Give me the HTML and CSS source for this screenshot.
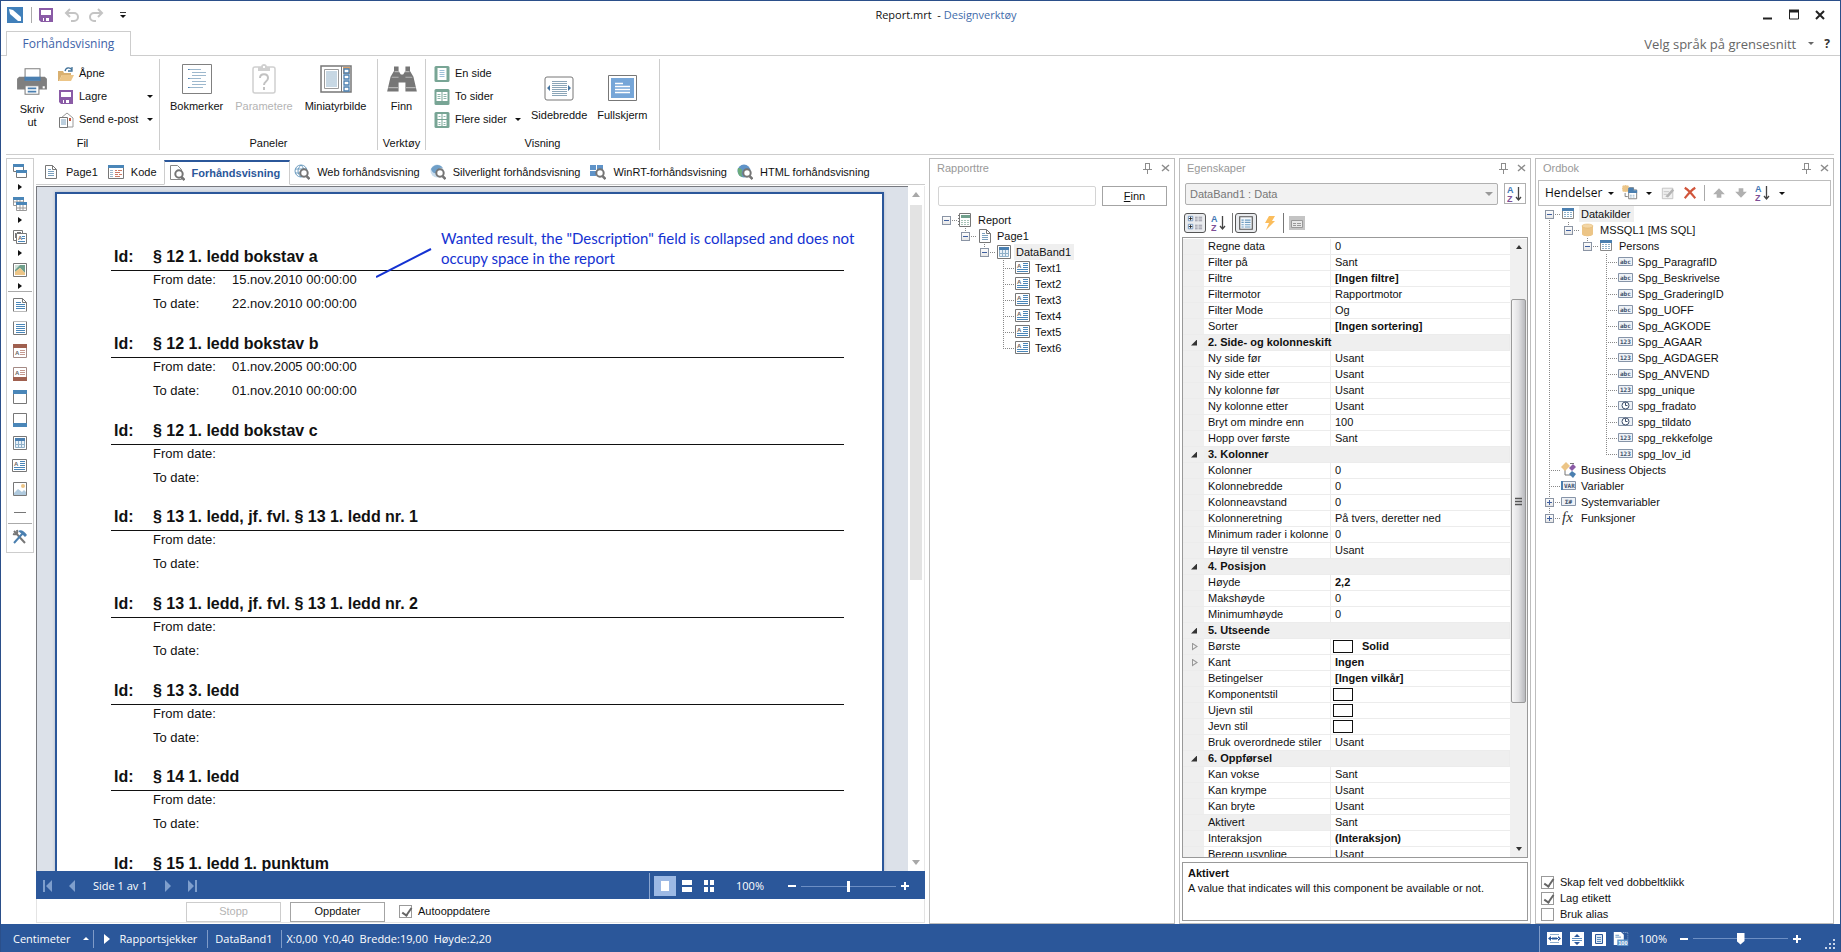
FILE: index.html
```html
<!DOCTYPE html>
<html lang="no">
<head>
  <meta charset="UTF-8">
  <meta name="viewport" content="width=device-width, initial-scale=1.0">
  <title>Report.mrt - Designverktøy</title>
  <link rel="stylesheet" href="styles.css">
</head>
<body>
  <!-- icon sprite -->
  <svg class="sprite" aria-hidden="true">
    <symbol id="i-save" viewBox="0 0 16 16"><path d="M1 1h14v14H3l-2-2z" fill="#8a5ba6"/><path d="M3 3h10v5H3zM5 11h6v3H5z" fill="#fff"/><path d="M6 11h2v3H6z" fill="#8a5ba6"/></symbol>
    <symbol id="i-undo" viewBox="0 0 16 16"><path d="M6 2L2 6l4 4M2 6h8a4 4 0 0 1 0 8H7" fill="none" stroke="#c4c4c4" stroke-width="2"/></symbol>
    <symbol id="i-redo" viewBox="0 0 16 16"><path d="M10 2l4 4-4 4M14 6H6a4 4 0 0 0 0 8h2" fill="none" stroke="#c4c4c4" stroke-width="2"/></symbol>
    <symbol id="i-open" viewBox="0 0 16 16"><path d="M0 5h5l1 2h7v2H4l-3 6H0z" fill="#d9b070"/><path d="M4 9h12l-3 6H1z" fill="#ecc587"/><path d="M7 5c1-4 5-4 7-1M14 1v4h-4" fill="none" stroke="#3f7098" stroke-width="1.3"/></symbol>
    <symbol id="i-mail" viewBox="0 0 16 16"><path d="M3 6l6-5 6 5v9H8V6z" fill="#fff" stroke="#999"/><path d="M1.500 5.500h8v10h-8z" fill="#fff" stroke="#777"/><path d="M3 8h5M3 10h5M3 12h5" stroke="#7aa0be"/><path d="M11 6h2v3h-2z" fill="#c9543c"/></symbol>
    <symbol id="i-print" viewBox="0 0 30 28"><path d="M3 9h24l2 2v10H1V11z" fill="#7f7f7f"/><path d="M8.500 1.500h14v12h-14z" fill="#fff" stroke="#7f7f7f"/><path d="M8 9h15v4H8z" fill="#4a7fb0"/><path d="M8.500 17.500h13v8h-13z" fill="#fff" stroke="#7f7f7f"/><path d="M11 20h8M11 23h8" stroke="#4a7fb0" stroke-width="1.500"/><path d="M25 18h2v2h-2z" fill="#fff"/></symbol>
    <symbol id="i-bookmarks" viewBox="0 0 32 32"><path d="M1.500 1.500h29v29h-29z" fill="#fff" stroke="#808080"/><path d="M8 6.500h12M11 9.500h14M11 12.500h14M8 15.500h12M11 18.500h14M11 21.500h14M8 24.500h14" stroke="#9db8cd"/><path d="M7 6.500h1.500M7 15.500h1.500M7 24.500h1.500" stroke="#4a7fb0"/></symbol>
    <symbol id="i-params" viewBox="0 0 32 32"><path d="M7 4h18a2 2 0 0 1 2 2v22a2 2 0 0 1-2 2H7a2 2 0 0 1-2-2V6a2 2 0 0 1 2-2z" fill="none" stroke="#d0d0d0" stroke-width="1.500"/><path d="M10 4h3c0-4 6-4 6 0h3v4H10z" fill="#d0d0d0"/><path d="M15 3h2v2h-2z" fill="#fff"/><path d="M12 15c0-5 8-5 8 0 0 4-4 3-4 7M16 24v3" fill="none" stroke="#c2c2c2" stroke-width="2"/></symbol>
    <symbol id="i-thumbs" viewBox="0 0 32 32"><path d="M1 3h30v26H1z" fill="#fff" stroke="#777" stroke-width="1.500"/><path d="M21.500 3v26" stroke="#777"/><path d="M4.500 6.500h14v19h-14z" fill="#fff" stroke="#999"/><path d="M6 9h11M6 11h11M6 13h11M6 15h11M6 17h11M6 19h11M6 21h11M6 23h11" stroke="#8fb0c8"/><path d="M23 4h7v7h-7z" fill="#d6a06c"/><path d="M24 6h5v4h-5zM24 12h5v4h-5zM24 18h5v4h-5zM24 24h5v4h-5z" fill="#fff" stroke="#4a7fb0" stroke-width="1.300"/></symbol>
    <symbol id="i-find" viewBox="0 0 28 28"><path d="M7 3h4v4l2 3h2l2-3V3h4v4l3 5 3 13H17v-8h-6v8H1l3-13 3-5z" fill="#767676"/><path d="M7.500 7.500h4M16.500 7.500h4M5 12.500h6M17 12.500h6M2 21.500h9M17 21.500h9" stroke="#b5b5b5"/></symbol>
    <symbol id="i-one" viewBox="0 0 15 16"><rect width="15" height="16" rx="1.500" fill="#78a595"/><path d="M3 2h9v12H3z" fill="#fff"/><path d="M5 4.500h5M5 6.500h5M5 8.500h5M5 10.500h5" stroke="#9ec0d8"/></symbol>
    <symbol id="i-two" viewBox="0 0 15 16"><rect width="15" height="16" rx="1.500" fill="#78a595"/><path d="M2 3h5v9H2zM8 3h5v9H8z" fill="#fff"/><path d="M3 5.500h3M3 7.500h3M3 9.500h3M9 5.500h3M9 7.500h3M9 9.500h3" stroke="#8db6aa"/></symbol>
    <symbol id="i-many" viewBox="0 0 15 16"><rect width="15" height="16" rx="1.500" fill="#78a595"/><path d="M3 2h4v5H3zM8 2h4v5H8zM3 8h4v6H3zM8 8h4v6H8z" fill="#fff"/><path d="M4 4.500h2M9 4.500h2M4 10.500h2M9 10.500h2M4 12.500h2M9 12.500h2" stroke="#8db6aa"/></symbol>
    <symbol id="i-width" viewBox="0 0 32 32"><rect x="2" y="5" width="28" height="23" rx="2" fill="#fff" stroke="#777"/><path d="M9 9.500h15M9 11.500h15M9 13.500h15M9 15.500h15M9 17.500h15M9 19.500h15M9 21.500h15M9 23.500h15" stroke="#8aa5b8"/><path d="M7 13v6l-3-3zM25 13v6l3-3z" fill="#44739f"/></symbol>
    <symbol id="i-full" viewBox="0 0 32 32"><path d="M2.500 3.500h28v25h-28z" fill="#fff" stroke="#777"/><path d="M5 6h23v20H5z" fill="#76a6d8"/><path d="M9 11.500h8M9 14.500h15M9 17.500h15M9 20.500h15" stroke="#fff" stroke-width="1.300"/></symbol>

    <symbol id="i-page" viewBox="0 0 16 16"><path d="M2.500 1.500h7l4 4v9h-11z" fill="#fff" stroke="#777"/><path d="M9.500 1.500v4h4" fill="none" stroke="#777"/><path d="M5 5.500h3M5 7.500h6M5 9.500h6M5 11.500h6" stroke="#7aa0be"/></symbol>
    <symbol id="i-code" viewBox="0 0 16 16"><path d="M.500 1.500h15v13H.500z" fill="#fff" stroke="#777"/><path d="M0 1h16v3H0z" fill="#4a86b8"/><path d="M2 6.500h3M2 8.500h3M2 10.500h3M2 12.500h3" stroke="#9db8cd"/><path d="M7 6.500h2M10 6.500h4M7 8.500h5M7 10.500h3M11 10.500h3M7 12.500h5" stroke="#cc7a66"/></symbol>
    <symbol id="i-lens" viewBox="0 0 16 16"><circle cx="10" cy="9" r="3.700" fill="#fff" stroke="#757575" stroke-width="2"/><path d="M12.500 12l3 3" stroke="#757575" stroke-width="2.500"/></symbol>
    <symbol id="i-preview" viewBox="0 0 16 16"><path d="M1.500.500h7l4 4v10h-11z" fill="#fff" stroke="#888"/><use href="#i-lens"/></symbol>
    <symbol id="i-web" viewBox="0 0 16 16"><circle cx="7" cy="7" r="6" fill="#fff" stroke="#6c9cc0"/><path d="M1 5h12M1 9h12M7 1c-4 4-4 8 0 12M7 1c4 4 4 8 0 12" fill="none" stroke="#6c9cc0"/><use href="#i-lens"/></symbol>
    <symbol id="i-silver" viewBox="0 0 16 16"><circle cx="7" cy="7" r="6.500" fill="#c8dcec"/><path d="M1 5c3-5 9-5 12-1-4-1-5 2-6 5-3 1-5-1-6-4z" fill="#6f9fc8"/><use href="#i-lens"/></symbol>
    <symbol id="i-winrt" viewBox="0 0 16 16"><path d="M0 1h6v5H0zM7 1h6v5H7zM0 7h6v5H0zM7 7h6v5H7z" fill="#5f93c8"/><use href="#i-lens"/></symbol>
    <symbol id="i-html" viewBox="0 0 16 16"><circle cx="7" cy="7" r="6.500" fill="#5f93c8"/><path d="M1 4c3 0 5 2 4 4s0 4 1 5C2 13 0 9 1 4z" fill="#6bab7b"/><use href="#i-lens"/></symbol>

    <symbol id="i-bands" viewBox="0 0 16 16"><path d="M1.500 1.500h10v7h-10z" fill="#fff" stroke="#777"/><path d="M1 1h11v3H1z" fill="#4a86b8"/><path d="M4.500 7.500h10v7h-10z" fill="#fff" stroke="#777"/><path d="M4 7h11v3H4z" fill="#4a86b8"/></symbol>
    <symbol id="i-cross" viewBox="0 0 16 16"><path d="M1.500 1.500h10v8h-10zM5 2v8M8 2v8M2 6h10" fill="#fff" stroke="#999"/><path d="M1 1h11v3H1z" fill="#4a86b8"/><path d="M4.500 6.500h10v8h-10zM8 7v8M11 7v8M4 12h11" fill="#fff" stroke="#999"/><path d="M4 6h11v3H4z" fill="#4a86b8"/></symbol>
    <symbol id="i-comps" viewBox="0 0 16 16"><path d="M1.500 1.500h9v10h-9z" fill="#fff" stroke="#777"/><path d="M3.500 4v5M5 3.500h4" stroke="#777"/><path d="M4.500 4.500h10v10h-10z" fill="#fff" stroke="#777"/><text x="6" y="11" class="i-a">A</text><path d="M10 7.500h3M10 9.500h3M6 12.500h7" stroke="#4a86b8"/></symbol>
    <symbol id="i-shape" viewBox="0 0 16 16"><path d="M1.500 1.500h13v13h-13z" fill="#fff" stroke="#777"/><path d="M3 3h10v8l-5-5-5 4z" fill="#70a08c"/><path d="M8 6l5 5v2H3v-3z" fill="#ecc587"/><path d="M3 3h5L3 8z" fill="#cfe0d8"/></symbol>
    <symbol id="i-rtitle" viewBox="0 0 16 16"><path d="M1.500 14v-12.500h9l4 4V14" fill="#fff" stroke="#777"/><path d="M10.500 1.500v4h4" fill="none" stroke="#777"/><path d="M4 5.500h5M4 7.500h9M4 9.500h9M4 11.500h9" stroke="#4a86b8"/><path d="M1.500 14.500h14" stroke="#777" stroke-dasharray="1 1"/></symbol>
    <symbol id="i-rsum" viewBox="0 0 16 16"><path d="M1.500 2v12.500h13V2" fill="#fff" stroke="#777"/><path d="M1.500 1.500h14" stroke="#777" stroke-dasharray="1 1"/><path d="M4 4.500h9M4 6.500h9M4 8.500h9M4 10.500h9M4 12.500h9" stroke="#4a86b8"/></symbol>
    <symbol id="i-phead" viewBox="0 0 16 16"><path d="M1.500 1.500h13v13h-13z" fill="#fff" stroke="#a58a85"/><path d="M1 1h14v4H1z" fill="#a0604f"/><text x="3" y="12" class="i-a">A</text><path d="M8 7.500h5M8 9.500h5M8 11.500h5" stroke="#c59a90"/></symbol>
    <symbol id="i-pfoot" viewBox="0 0 16 16"><path d="M1.500 1.500h13v13h-13z" fill="#fff" stroke="#a58a85"/><path d="M1 11h14v4H1z" fill="#a0604f"/><text x="3" y="9" class="i-a">A</text><path d="M8 4.500h5M8 6.500h5M8 8.500h5" stroke="#c59a90"/></symbol>
    <symbol id="i-head" viewBox="0 0 16 16"><path d="M1.500 1.500h13v13h-13z" fill="#fff" stroke="#777"/><path d="M1 1h14v4H1z" fill="#4a86b8"/></symbol>
    <symbol id="i-foot" viewBox="0 0 16 16"><path d="M1.500 1.500h13v13h-13z" fill="#fff" stroke="#777"/><path d="M1 11h14v4H1z" fill="#4a86b8"/></symbol>
    <symbol id="i-data" viewBox="0 0 16 16"><path d="M1.500 1.500h13v13h-13z" fill="#fff" stroke="#777"/><path d="M3.500 3.500h9v9h-9z" fill="#e8f0f8" stroke="#8fb0c8"/><path d="M3 3h10v3H3z" fill="#4a7fb0"/><path d="M3 9.500h10M6.500 6v7M9.500 6v7" stroke="#8fb0c8"/></symbol>
    <symbol id="i-text" viewBox="0 0 16 16"><path d="M.500 1.500h14v12h-14z" fill="#fff" stroke="#777"/><text x="2" y="8" class="i-a">A</text><path d="M8 3.500h5M8 5.500h5M8 7.500h5M2 9.500h11M2 11.500h11" stroke="#4a86b8"/></symbol>
    <symbol id="i-image" viewBox="0 0 16 16"><path d="M1.500 1.500h13v13h-13z" fill="#fff" stroke="#777"/><circle cx="11" cy="5" r="2" fill="#ecc587"/><path d="M2 14v-2l4-4 4 3 2-2 2 2v3z" fill="#b0cade"/></symbol>
    <symbol id="i-line" viewBox="0 0 16 16"><path d="M2 8.500h12" stroke="#777"/></symbol>
    <symbol id="i-tools" viewBox="0 0 16 16"><path d="M2 2l11 12M1 5c3 1 5 0 4-4" stroke="#777" stroke-width="2" fill="none"/><path d="M2 14L11 4" stroke="#4a7fb0" stroke-width="2"/><path d="M6 2c3-2 6 0 9 4l-2 2-3-3z" fill="#4a7fb0"/></symbol>

    <symbol id="i-report" viewBox="0 0 16 16"><path d="M1.500 1.500h11v13h-11z" fill="#fff" stroke="#777"/><path d="M3 3h9v3H3z" fill="#70a08c"/><path d="M3 8.500h9M3 10.500h9M3 12.500h9" stroke="#a8c4b8" stroke-dasharray="2 1"/><path d="M0 3.500h2M0 6.500h2M0 9.500h2M0 12.500h2" stroke="#777"/></symbol>
    <symbol id="i-table" viewBox="0 0 16 16"><path d="M1.500 2.500h11v10h-11z" fill="#fff" stroke="#888"/><path d="M1 2h12v3H1z" fill="#4a7fb0"/><path d="M3 6.500h8M3 8.500h8M3 10.500h8" stroke="#8fb0c8" stroke-dasharray="2 1"/></symbol>
    <symbol id="i-db" viewBox="0 0 16 16"><path d="M2 4v8c0 3 11 3 11 0V4z" fill="#ecc587"/><ellipse cx="7.500" cy="4" rx="5.500" ry="2" fill="#f3d6a6" stroke="#e0b368" stroke-width=".5"/></symbol>
    <symbol id="i-abc" viewBox="0 0 16 16"><path d="M.500 3.500h14v8H.500z" fill="#eef2f7" stroke="#8694a8"/><text x="2" y="10" class="i-t">abc</text></symbol>
    <symbol id="i-num" viewBox="0 0 16 16"><path d="M.500 3.500h14v8H.500z" fill="#eef2f7" stroke="#8694a8"/><text x="2" y="10" class="i-t">123</text></symbol>
    <symbol id="i-date" viewBox="0 0 16 16"><path d="M.500 3.500h14v8H.500z" fill="#eef2f7" stroke="#8694a8"/><circle cx="7.500" cy="7.500" r="3.500" fill="#fff" stroke="#3d4f6b"/><path d="M7.500 4.500v3h2" fill="none" stroke="#3d4f6b"/></symbol>
    <symbol id="i-var" viewBox="0 0 16 16"><path d="M.500 3.500h14v8H.500z" fill="#eef2f7" stroke="#8694a8"/><path d="M0 3h2v9H0z" fill="#4a7fb0"/><text x="3" y="10" class="i-t">VAR</text></symbol>
    <symbol id="i-sys" viewBox="0 0 16 16"><path d="M.500 3.500h14v8H.500z" fill="#eef2f7" stroke="#8694a8"/><text x="4" y="10" class="i-t">Σ#</text></symbol>
    <symbol id="i-bo" viewBox="0 0 16 16"><path d="M4 8v5h6M9 1.500h4" fill="none" stroke="#777"/><path d="M0 5l5-5 4 4-5 5z" fill="#ecc587"/><path d="M8 6l4-4 3 3-4 4z" fill="#8a5ba6"/><path d="M8 12l3-3 4 3-3 4z" fill="#4a7fb0"/></symbol>
    <symbol id="i-fx" viewBox="0 0 16 16"><text x="1" y="12" class="i-fx">fx</text></symbol>

    <symbol id="i-pin" viewBox="0 0 12 12"><path d="M3.500 1v6M3 1.500h5M1 7.500h9M5.500 8v4" fill="none" stroke="#8c8c8c"/><path d="M7 1h1v6H7z" fill="#8c8c8c"/></symbol>
    <symbol id="i-close" viewBox="0 0 12 12"><path d="M2 3l7 6M9 3L2 9" stroke="#8c8c8c" stroke-width="1.500"/></symbol>
    <symbol id="i-az" viewBox="0 0 16 18"><text x="0" y="8" class="i-letter blue">A</text><text x="0" y="17" class="i-letter purple">Z</text><path d="M11.500 2v13M9 12l2.500 3 2.500-3" fill="none" stroke="#444" stroke-width="1.300"/></symbol>
    <symbol id="i-cat" viewBox="0 0 18 18"><path d="M1.500 1.500h5v5h-5zM1.500 10.500h5v5h-5z" fill="#fff" stroke="#6c93c0"/><path d="M2 4h4M4 2v4M2 13h4M4 11v4" stroke="#222"/><path d="M9 2.500h3M13 2.500h4M9 4.500h3M13 4.500h4M9 6.500h3M13 6.500h4M9 11.500h3M13 11.500h4M9 13.500h3M13 13.500h4M9 15.500h3M13 15.500h4" stroke="#8a8a9a"/></symbol>
    <symbol id="i-list" viewBox="0 0 14 14"><path d="M1.500 1.500h11v11h-11z" fill="#f4f8fc" stroke="#555"/><path d="M3 4.500h2M6 4.500h5M3 6.500h2M6 6.500h5M3 8.500h2M6 8.500h5M3 10.500h2M6 10.500h5" stroke="#6c9cc0"/></symbol>
    <symbol id="i-bolt" viewBox="0 0 12 16"><path d="M5 1h6L8 6h3L2 15l3-7H1z" fill="#fbbd5c"/></symbol>
    <symbol id="i-props" viewBox="0 0 16 16"><path d="M0 1h16v14H0z" fill="#c4c4c4"/><path d="M2.500 5.500h11v7h-11z" fill="#e8e8e8" stroke="#999"/><path d="M4 8.500h3M8 8.500h4M4 10.500h3M8 10.500h4" stroke="#999"/></symbol>
    <symbol id="i-new" viewBox="0 0 18 18"><path d="M1 1h6v6H1zM4 0v8M0 4h8" fill="#ecc587" stroke="#ecc587"/><path d="M3.500 9v4h3M8 3h5v3" fill="none" stroke="#777"/><path d="M7.500 5.500h9v10h-9z" fill="#fff" stroke="#777"/><path d="M7 3h6v3h4v3H7z" fill="#4a7fb0"/><path d="M9 11.500h6M9 13.500h6" stroke="#8fb0c8" stroke-dasharray="2 1"/></symbol>
    <symbol id="i-edit" viewBox="0 0 16 16"><path d="M1.500 2.500h12v12h-12z" fill="#f0f0f0" stroke="#c0c0c0"/><path d="M3 6.500h6M3 9.500h4" stroke="#c0c0c0"/><path d="M5 12l8-9 2 2-7 8z" fill="#b4b4b4"/></symbol>
    <symbol id="i-del" viewBox="0 0 16 16"><path d="M2 2c5 3 8 7 12 12M14 2C9 5 6 9 2 14" fill="none" stroke="#d1553b" stroke-width="2.500"/></symbol>
    <symbol id="i-up" viewBox="0 0 12 12"><path d="M6 2l5 5H8v3H4V7H1z" fill="#b0b0b0"/></symbol>
    <symbol id="i-down" viewBox="0 0 12 12"><path d="M6 10L1 5h3V2h4v3h3z" fill="#b0b0b0"/></symbol>
    <symbol id="i-fitw" viewBox="0 0 16 14"><path d="M0 0h15v13H0z" fill="#fff"/><path d="M3 2.500h9M3 10.500h9" stroke="#8fb0d0"/><path d="M5 5h5v3H5z" fill="#8fb0d0"/><path d="M4 4v5L1 6.500zM11 4v5l3-2.500zM3 6h9v1H3z" fill="#2b579a"/></symbol>
    <symbol id="i-fith" viewBox="0 0 14 14"><path d="M0 0h14v14H0z" fill="#fff"/><path d="M2 6.500h10M2 8.500h10" stroke="#5f8fc0"/><path d="M4 5h6L7 2zM4 10h6l-3 3z" fill="#2b579a"/></symbol>
    <symbol id="i-fitp" viewBox="0 0 14 14"><path d="M0 0h14v14H0z" fill="#fff"/><path d="M3.500 2.500h7v9h-7z" fill="#dce8f4" stroke="#2b579a"/><path d="M5 5.500h4M5 7.500h4M5 9.500h4" stroke="#5f8fc0"/></symbol>
    <symbol id="i-fit1" viewBox="0 0 16 15"><path d="M0 0h8l3 3v11H0z" fill="#fff"/><path d="M2 3.500h4M2 5.500h6" stroke="#5f8fc0"/><path d="M10 .500h5.500V8" fill="none" stroke="#a9bfdd" stroke-dasharray="1 1"/><path d="M4 8h12v7H4z" fill="#5f93c8"/><text x="5" y="14" class="i-fit">100</text></symbol>
  </svg>

  <header class="titlebar">
    <svg class="app-icon" viewBox="0 0 16 16"><path d="M0 0h16v16H0z" fill="#4180ba"/><path d="M2 2l4 1 8 7v4h-3L3 7z" fill="#fff"/></svg>
    <span class="vline"></span>
    <button class="quick" aria-label="Lagre"><svg class="icon"><use href="#i-save"/></svg></button>
    <button class="quick" aria-label="Angre"><svg class="icon"><use href="#i-undo"/></svg></button>
    <button class="quick" aria-label="Gjenta"><svg class="icon"><use href="#i-redo"/></svg></button>
    <button class="quick customize" aria-label="Tilpass"><span class="caret"></span></button>
    <h1>Report.mrt &nbsp;- <span>Designverktøy</span></h1>
    <div class="window-buttons">
      <button aria-label="Minimer"><svg viewBox="0 0 12 12"><path d="M1 9.500h9" stroke="#222" stroke-width="2"/></svg></button>
      <button aria-label="Maksimer"><svg viewBox="0 0 12 12"><path d="M1.500 2h9v8h-9z" fill="none" stroke="#222"/><path d="M1 2h10" stroke="#222" stroke-width="3"/></svg></button>
      <button aria-label="Lukk"><svg viewBox="0 0 12 12"><path d="M2 2l8 8M10 2l-8 8" stroke="#222" stroke-width="2"/></svg></button>
    </div>
  </header>

  <nav class="ribbon-tabs">
    <a class="ribbon-tab" href="#ribbon">Forhåndsvisning</a>
    <div class="language">
      <button>Velg språk på grensesnitt <span class="caret"></span></button>
      <button class="help">?</button>
    </div>
  </nav>

  <section class="ribbon" id="ribbon">
    <div class="group group-file">
      <div class="group-body">
        <button class="big big-print"><svg class="icon-big"><use href="#i-print"/></svg>Skriv<br>ut</button>
        <div class="small-list">
          <button class="small"><svg class="icon"><use href="#i-open"/></svg><span>Åpne</span></button>
          <button class="small"><svg class="icon"><use href="#i-save"/></svg><span>Lagre</span><span class="caret"></span></button>
          <button class="small"><svg class="icon"><use href="#i-mail"/></svg><span>Send e-post</span><span class="caret"></span></button>
        </div>
      </div>
      <h2>Fil</h2>
    </div>
    <div class="group group-panels">
      <div class="group-body">
        <button class="big"><svg class="icon-big"><use href="#i-bookmarks"/></svg>Bokmerker</button>
        <button class="big" disabled><svg class="icon-big"><use href="#i-params"/></svg>Parametere</button>
        <button class="big"><svg class="icon-big"><use href="#i-thumbs"/></svg>Miniatyrbilde</button>
      </div>
      <h2>Paneler</h2>
    </div>
    <div class="group group-tools">
      <div class="group-body">
        <button class="big"><svg class="icon-big"><use href="#i-find"/></svg>Finn</button>
      </div>
      <h2>Verktøy</h2>
    </div>
    <div class="group group-view">
      <div class="group-body">
        <div class="small-list">
          <button class="small"><svg class="icon"><use href="#i-one"/></svg><span>En side</span></button>
          <button class="small"><svg class="icon"><use href="#i-two"/></svg><span>To sider</span></button>
          <button class="small"><svg class="icon"><use href="#i-many"/></svg><span>Flere sider</span><span class="caret"></span></button>
        </div>
        <button class="big"><svg class="icon-big"><use href="#i-width"/></svg>Sidebredde</button>
        <button class="big"><svg class="icon-big"><use href="#i-full"/></svg>Fullskjerm</button>
      </div>
      <h2>Visning</h2>
    </div>
  </section>

  <main>
    <aside class="toolbox">
      <button class="with-menu" aria-label="Bånd"><svg class="icon"><use href="#i-bands"/></svg></button>
      <button class="with-menu" aria-label="Kryssbånd"><svg class="icon"><use href="#i-cross"/></svg></button>
      <button class="with-menu" aria-label="Komponenter"><svg class="icon"><use href="#i-comps"/></svg></button>
      <button class="with-menu" aria-label="Former"><svg class="icon"><use href="#i-shape"/></svg></button>
      <hr>
      <button aria-label="Rapporttittel"><svg class="icon"><use href="#i-rtitle"/></svg></button>
      <button aria-label="Rapportsammendrag"><svg class="icon"><use href="#i-rsum"/></svg></button>
      <button aria-label="Sidetopp"><svg class="icon"><use href="#i-phead"/></svg></button>
      <button aria-label="Sidebunn"><svg class="icon"><use href="#i-pfoot"/></svg></button>
      <button aria-label="Topptekst"><svg class="icon"><use href="#i-head"/></svg></button>
      <button aria-label="Bunntekst"><svg class="icon"><use href="#i-foot"/></svg></button>
      <button aria-label="Data"><svg class="icon"><use href="#i-data"/></svg></button>
      <button aria-label="Tekst"><svg class="icon"><use href="#i-text"/></svg></button>
      <button aria-label="Bilde"><svg class="icon"><use href="#i-image"/></svg></button>
      <button aria-label="Linje"><svg class="icon"><use href="#i-line"/></svg></button>
      <hr>
      <button aria-label="Verktøy"><svg class="icon"><use href="#i-tools"/></svg></button>
    </aside>

    <section class="workspace">
      <nav class="doc-tabs">
        <a href="#page"><svg class="icon"><use href="#i-page"/></svg>Page1</a>
        <a href="#page"><svg class="icon"><use href="#i-code"/></svg>Kode</a>
        <a href="#page" class="active"><svg class="icon"><use href="#i-preview"/></svg>Forhåndsvisning</a>
        <a href="#page"><svg class="icon"><use href="#i-web"/></svg>Web forhåndsvisning</a>
        <a href="#page"><svg class="icon"><use href="#i-silver"/></svg>Silverlight forhåndsvisning</a>
        <a href="#page"><svg class="icon"><use href="#i-winrt"/></svg>WinRT-forhåndsvisning</a>
        <a href="#page"><svg class="icon"><use href="#i-html"/></svg>HTML forhåndsvisning</a>
      </nav>

      <div class="viewer">
        <div class="canvas">
          <article class="page" id="page">
            <div class="record"><h3><span>Id:</span>§ 12 1. ledd bokstav a</h3><p><span>From date:</span>15.nov.2010 00:00:00</p><p><span>To date:</span>22.nov.2010 00:00:00</p></div>
            <div class="record"><h3><span>Id:</span>§ 12 1. ledd bokstav b</h3><p><span>From date:</span>01.nov.2005 00:00:00</p><p><span>To date:</span>01.nov.2010 00:00:00</p></div>
            <div class="record"><h3><span>Id:</span>§ 12 1. ledd bokstav c</h3><p><span>From date:</span></p><p><span>To date:</span></p></div>
            <div class="record"><h3><span>Id:</span>§ 13 1. ledd, jf. fvl. § 13 1. ledd nr. 1</h3><p><span>From date:</span></p><p><span>To date:</span></p></div>
            <div class="record"><h3><span>Id:</span>§ 13 1. ledd, jf. fvl. § 13 1. ledd nr. 2</h3><p><span>From date:</span></p><p><span>To date:</span></p></div>
            <div class="record"><h3><span>Id:</span>§ 13 3. ledd</h3><p><span>From date:</span></p><p><span>To date:</span></p></div>
            <div class="record"><h3><span>Id:</span>§ 14 1. ledd</h3><p><span>From date:</span></p><p><span>To date:</span></p></div>
            <div class="record"><h3><span>Id:</span>§ 15 1. ledd 1. punktum</h3></div>
            <div class="note">
              <svg viewBox="0 0 56 30"><path d="M0 29L55 1" stroke="#1432d2" stroke-width="2"/></svg>
              <p>Wanted result, the "Description" field is collapsed and does not<br>occupy space in the report</p>
            </div>
          </article>
        </div>
        <div class="scroll"><i class="tri-up"></i><span class="thumb"></span><i class="tri-down"></i></div>
      </div>

      <div class="pager">
        <button aria-label="Første side"><svg viewBox="0 0 10 12"><path d="M0 0h2v12H0zM9 0v12L3 6z" fill="#7f9fcd"/></svg></button>
        <button aria-label="Forrige side"><svg viewBox="0 0 10 12"><path d="M8 0v12L2 6z" fill="#7f9fcd"/></svg></button>
        <span class="page-no">Side 1 av 1</span>
        <button aria-label="Neste side"><svg viewBox="0 0 10 12"><path d="M2 0v12l6-6z" fill="#7f9fcd"/></svg></button>
        <button aria-label="Siste side"><svg viewBox="0 0 10 12"><path d="M8 0h2v12H8zM1 0v12l6-6z" fill="#7f9fcd"/></svg></button>
        <div class="pager-right">
          <button class="mode on" aria-label="Enkel side"><svg viewBox="0 0 10 12"><path d="M1 1h8v10H1z" fill="#fff"/></svg></button>
          <button class="mode" aria-label="Kontinuerlig"><svg viewBox="0 0 10 12"><path d="M0 0h10v5H0zM0 7h10v5H0z" fill="#fff"/></svg></button>
          <button class="mode" aria-label="Flere sider"><svg viewBox="0 0 10 12"><path d="M0 0h4v5H0zM6 0h4v5H6zM0 7h4v5H0zM6 7h4v5H6z" fill="#fff"/></svg></button>
          <span class="percent">100%</span>
          <button class="zoom" aria-label="Zoom ut"><svg viewBox="0 0 10 10"><path d="M1 5h8" stroke="#fff" stroke-width="2"/></svg></button>
          <input type="range" class="slider bar" aria-label="Zoom" min="0" max="200" value="100">
          <button class="zoom" aria-label="Zoom inn"><svg viewBox="0 0 10 10"><path d="M1 5h8M5 1v8" stroke="#fff" stroke-width="2"/></svg></button>
        </div>
      </div>

      <div class="actions">
        <button class="plain" disabled>Stopp</button>
        <button class="plain">Oppdater</button>
        <label class="check"><input type="checkbox" checked>Autooppdatere</label>
      </div>
    </section>

    <section class="panel report-tree">
      <header><h2>Rapporttre</h2><button aria-label="Fest"><svg><use href="#i-pin"/></svg></button><button aria-label="Lukk"><svg><use href="#i-close"/></svg></button></header>
      <form class="search">
        <input type="text" aria-label="Finn i rapport">
        <button type="button" class="plain"><span><u>F</u>inn</span></button>
      </form>
      <ul class="tree">
        <li><div class="node"><i class="toggle"></i><svg class="icon"><use href="#i-report"/></svg><span>Report</span></div>
          <ul>
            <li><div class="node"><i class="toggle"></i><svg class="icon"><use href="#i-page"/></svg><span>Page1</span></div>
              <ul>
                <li><div class="node selected"><i class="toggle"></i><svg class="icon"><use href="#i-data"/></svg><span>DataBand1</span></div>
                  <ul>
                    <li><div class="node leaf"><svg class="icon"><use href="#i-text"/></svg><span>Text1</span></div></li>
                    <li><div class="node leaf"><svg class="icon"><use href="#i-text"/></svg><span>Text2</span></div></li>
                    <li><div class="node leaf"><svg class="icon"><use href="#i-text"/></svg><span>Text3</span></div></li>
                    <li><div class="node leaf"><svg class="icon"><use href="#i-text"/></svg><span>Text4</span></div></li>
                    <li><div class="node leaf"><svg class="icon"><use href="#i-text"/></svg><span>Text5</span></div></li>
                    <li><div class="node leaf"><svg class="icon"><use href="#i-text"/></svg><span>Text6</span></div></li>
                  </ul>
                </li>
              </ul>
            </li>
          </ul>
        </li>
      </ul>
    </section>

    <section class="panel properties">
      <header><h2>Egenskaper</h2><button aria-label="Fest"><svg><use href="#i-pin"/></svg></button><button aria-label="Lukk"><svg><use href="#i-close"/></svg></button></header>
      <div class="component-row">
        <div class="select-box"><select aria-label="Komponent" disabled><option>DataBand1 : Data</option></select></div>
        <button class="sort" aria-label="Sorter"><svg><use href="#i-az"/></svg></button>
      </div>
      <div class="prop-toolbar">
        <button class="pressed" aria-label="Kategorisert"><svg viewBox="0 0 18 18"><use href="#i-cat"/></svg></button>
        <button aria-label="Alfabetisk"><svg class="az" viewBox="0 0 16 18"><use href="#i-az"/></svg></button>
        <span class="vline"></span>
        <button class="pressed" aria-label="Egenskaper"><svg viewBox="0 0 14 14"><use href="#i-list"/></svg></button>
        <button aria-label="Hendelser"><svg viewBox="0 0 12 16"><use href="#i-bolt"/></svg></button>
        <span class="vline"></span>
        <button aria-label="Egenskapssider" disabled><svg viewBox="0 0 16 16"><use href="#i-props"/></svg></button>
      </div>
      <div class="grid-box">
        <div class="grid-rows">
          <table>
            <colgroup><col class="c-gutter"><col class="c-name"><col></colgroup>
            <tbody>
              <tr><td></td><th>Regne data</th><td>0</td></tr>
              <tr><td></td><th>Filter på</th><td>Sant</td></tr>
              <tr><td></td><th>Filtre</th><td><b>[Ingen filtre]</b></td></tr>
              <tr><td></td><th>Filtermotor</th><td>Rapportmotor</td></tr>
              <tr><td></td><th>Filter Mode</th><td>Og</td></tr>
              <tr><td></td><th>Sorter</th><td><b>[Ingen sortering]</b></td></tr>
              <tr class="category"><td><i class="open"></i></td><th colspan="2">2. Side- og kolonneskift</th></tr>
              <tr><td></td><th>Ny side før</th><td>Usant</td></tr>
              <tr><td></td><th>Ny side etter</th><td>Usant</td></tr>
              <tr><td></td><th>Ny kolonne før</th><td>Usant</td></tr>
              <tr><td></td><th>Ny kolonne etter</th><td>Usant</td></tr>
              <tr><td></td><th>Bryt om mindre enn</th><td>100</td></tr>
              <tr><td></td><th>Hopp over første</th><td>Sant</td></tr>
              <tr class="category"><td><i class="open"></i></td><th colspan="2">3. Kolonner</th></tr>
              <tr><td></td><th>Kolonner</th><td>0</td></tr>
              <tr><td></td><th>Kolonnebredde</th><td>0</td></tr>
              <tr><td></td><th>Kolonneavstand</th><td>0</td></tr>
              <tr><td></td><th>Kolonneretning</th><td>På tvers, deretter ned</td></tr>
              <tr><td></td><th>Minimum rader i kolonne</th><td>0</td></tr>
              <tr><td></td><th>Høyre til venstre</th><td>Usant</td></tr>
              <tr class="category"><td><i class="open"></i></td><th colspan="2">4. Posisjon</th></tr>
              <tr><td></td><th>Høyde</th><td><b>2,2</b></td></tr>
              <tr><td></td><th>Makshøyde</th><td>0</td></tr>
              <tr><td></td><th>Minimumhøyde</th><td>0</td></tr>
              <tr class="category"><td><i class="open"></i></td><th colspan="2">5. Utseende</th></tr>
              <tr><td><i class="closed"></i></td><th>Børste</th><td class="swatch-cell"><div><i class="swatch"></i><b>Solid</b></div></td></tr>
              <tr><td><i class="closed"></i></td><th>Kant</th><td><b>Ingen</b></td></tr>
              <tr><td></td><th>Betingelser</th><td><b>[Ingen vilkår]</b></td></tr>
              <tr><td></td><th>Komponentstil</th><td class="swatch-cell"><div><i class="swatch"></i></div></td></tr>
              <tr><td></td><th>Ujevn stil</th><td class="swatch-cell"><div><i class="swatch"></i></div></td></tr>
              <tr><td></td><th>Jevn stil</th><td class="swatch-cell"><div><i class="swatch"></i></div></td></tr>
              <tr><td></td><th>Bruk overordnede stiler</th><td>Usant</td></tr>
              <tr class="category"><td><i class="open"></i></td><th colspan="2">6. Oppførsel</th></tr>
              <tr><td></td><th>Kan vokse</th><td>Sant</td></tr>
              <tr><td></td><th>Kan krympe</th><td>Usant</td></tr>
              <tr><td></td><th>Kan bryte</th><td>Usant</td></tr>
              <tr class="current"><td></td><th>Aktivert</th><td>Sant</td></tr>
              <tr><td></td><th>Interaksjon</th><td><b>(Interaksjon)</b></td></tr>
              <tr><td></td><th>Beregn usynlige</th><td>Usant</td></tr>
            </tbody>
          </table>
        </div>
        <div class="grid-scroll"><i class="tri-up"></i><span class="grid-thumb"><svg viewBox="0 0 8 9"><path d="M0 1.500h7M0 4.500h7M0 7.500h7" stroke="#555" stroke-width="1.500"/></svg></span><i class="tri-down"></i></div>
      </div>
      <div class="prop-help"><b>Aktivert</b><p>A value that indicates will this component be available or not.</p></div>
    </section>

    <section class="panel dictionary">
      <header><h2>Ordbok</h2><button aria-label="Fest"><svg><use href="#i-pin"/></svg></button><button aria-label="Lukk"><svg><use href="#i-close"/></svg></button></header>
      <div class="dict-toolbar">
        <button class="events">Hendelser</button>
        <button aria-label="Hendelser meny"><span class="caret"></span></button>
        <button aria-label="Ny"><svg class="new" viewBox="0 0 18 18"><use href="#i-new"/></svg></button>
        <button aria-label="Ny meny"><span class="caret"></span></button>
        <button aria-label="Rediger" disabled><svg class="icon"><use href="#i-edit"/></svg></button>
        <button aria-label="Slett"><svg class="icon"><use href="#i-del"/></svg></button>
        <span class="vline"></span>
        <button aria-label="Opp" disabled><svg viewBox="0 0 12 12"><use href="#i-up"/></svg></button>
        <button aria-label="Ned" disabled><svg viewBox="0 0 12 12"><use href="#i-down"/></svg></button>
        <button aria-label="Sorter"><svg class="az" viewBox="0 0 16 18"><use href="#i-az"/></svg></button>
        <button aria-label="Sorter meny"><span class="caret"></span></button>
      </div>
      <ul class="tree">
        <li><div class="node selected"><i class="toggle"></i><svg class="icon"><use href="#i-table"/></svg><span>Datakilder</span></div>
          <ul>
            <li><div class="node"><i class="toggle"></i><svg class="icon"><use href="#i-db"/></svg><span>MSSQL1 [MS SQL]</span></div>
              <ul>
                <li><div class="node"><i class="toggle"></i><svg class="icon"><use href="#i-table"/></svg><span>Persons</span></div>
                  <ul>
                    <li><div class="node leaf"><svg class="icon"><use href="#i-abc"/></svg><span>Spg_ParagrafID</span></div></li>
                    <li><div class="node leaf"><svg class="icon"><use href="#i-abc"/></svg><span>Spg_Beskrivelse</span></div></li>
                    <li><div class="node leaf"><svg class="icon"><use href="#i-abc"/></svg><span>Spg_GraderingID</span></div></li>
                    <li><div class="node leaf"><svg class="icon"><use href="#i-abc"/></svg><span>Spg_UOFF</span></div></li>
                    <li><div class="node leaf"><svg class="icon"><use href="#i-abc"/></svg><span>Spg_AGKODE</span></div></li>
                    <li><div class="node leaf"><svg class="icon"><use href="#i-num"/></svg><span>Spg_AGAAR</span></div></li>
                    <li><div class="node leaf"><svg class="icon"><use href="#i-num"/></svg><span>Spg_AGDAGER</span></div></li>
                    <li><div class="node leaf"><svg class="icon"><use href="#i-abc"/></svg><span>Spg_ANVEND</span></div></li>
                    <li><div class="node leaf"><svg class="icon"><use href="#i-num"/></svg><span>spg_unique</span></div></li>
                    <li><div class="node leaf"><svg class="icon"><use href="#i-date"/></svg><span>spg_fradato</span></div></li>
                    <li><div class="node leaf"><svg class="icon"><use href="#i-date"/></svg><span>spg_tildato</span></div></li>
                    <li><div class="node leaf"><svg class="icon"><use href="#i-num"/></svg><span>spg_rekkefolge</span></div></li>
                    <li><div class="node leaf"><svg class="icon"><use href="#i-num"/></svg><span>spg_lov_id</span></div></li>
                  </ul>
                </li>
              </ul>
            </li>
          </ul>
        </li>
        <li><div class="node leaf"><svg class="icon"><use href="#i-bo"/></svg><span>Business Objects</span></div></li>
        <li><div class="node leaf"><svg class="icon"><use href="#i-var"/></svg><span>Variabler</span></div></li>
        <li><div class="node"><i class="toggle plus"></i><svg class="icon"><use href="#i-sys"/></svg><span>Systemvariabler</span></div></li>
        <li><div class="node"><i class="toggle plus"></i><svg class="icon"><use href="#i-fx"/></svg><span>Funksjoner</span></div></li>
      </ul>
      <div class="dict-options">
        <label class="check"><input type="checkbox" checked>Skap felt ved dobbeltklikk</label>
        <label class="check"><input type="checkbox" checked>Lag etikett</label>
        <label class="check"><input type="checkbox">Bruk alias</label>
      </div>
    </section>
  </main>

  <footer class="statusbar">
    <button class="unit">Centimeter <i class="tri-up"></i></button>
    <button class="checker"><i class="play"></i>Rapportsjekker</button>
    <span class="cell">DataBand1</span>
    <span class="cell coords">X:0,00 &nbsp;Y:0,40 &nbsp;Bredde:19,00 &nbsp;Høyde:2,20</span>
    <div class="status-right">
      <button aria-label="Sidebredde"><svg viewBox="0 0 16 14"><use href="#i-fitw"/></svg></button>
      <button aria-label="Sidehøyde"><svg viewBox="0 0 14 14"><use href="#i-fith"/></svg></button>
      <button aria-label="Hel side"><svg viewBox="0 0 14 14"><use href="#i-fitp"/></svg></button>
      <button aria-label="Full størrelse"><svg viewBox="0 0 16 15"><use href="#i-fit1"/></svg></button>
      <span class="percent">100%</span>
      <button class="zoom" aria-label="Zoom ut"><svg viewBox="0 0 10 10"><path d="M1 5h8" stroke="#fff" stroke-width="2"/></svg></button>
      <input type="range" class="slider knob" aria-label="Zoom" min="0" max="200" value="100">
      <button class="zoom" aria-label="Zoom inn"><svg viewBox="0 0 10 10"><path d="M1 5h8M5 1v8" stroke="#fff" stroke-width="2"/></svg></button>
      <svg class="grip" viewBox="0 0 12 12"><path d="M9 1h2v2H9zM5 5h2v2H5zM9 5h2v2H9zM1 9h2v2H1zM5 9h2v2H5zM9 9h2v2H9z" fill="#c9d6ea"/></svg>
    </div>
  </footer>
</body>
</html>
```

FILE: styles.css
```css
* {
  box-sizing: border-box;
}

body {
  display: flex;
  flex-direction: column;
  height: 100vh;
  min-height: 600px;
  margin: 0;
  overflow: hidden;
  border: 1px solid #2b4f8a;
  border-bottom: none;
  background: #fff;
  color: #111;
  font-family: "Liberation Sans", Arial, sans-serif;
  font-size: 11px;
  line-height: 13px;
}

h1, h2, h3, p, ul {
  margin: 0;
  padding: 0;
  font-size: inherit;
  font-weight: normal;
}

button {
  display: flex;
  align-items: center;
  justify-content: center;
  padding: 0;
  border: none;
  background: none;
  color: inherit;
  font: inherit;
}

a {
  color: inherit;
  text-decoration: none;
}

svg {
  display: block;
  flex: none;
}

.sprite {
  display: none;
}

.icon {
  width: 16px;
  height: 16px;
}

.i-a {
  font: bold 6px "Liberation Sans", sans-serif;
  fill: #666;
}

.i-t {
  font: bold 6px "DejaVu Sans Mono", monospace;
  fill: #3d4f6b;
}

.i-fx {
  font: italic 15px "Liberation Serif", serif;
  fill: #333;
}

.i-fit {
  font: bold 6px "Liberation Sans", sans-serif;
  fill: #fff;
}

.i-letter {
  font: bold 9px "Liberation Sans", sans-serif;
}

.blue {
  fill: #3f78b4;
}

.purple {
  fill: #7d4f96;
}

.caret {
  flex: none;
  border: 3px solid transparent;
  border-top-color: #111;
  border-bottom: none;
}

.vline {
  width: 1px;
  background: #aaa;
}

.tri-up,
.tri-down {
  border: 4px solid transparent;
}

.tri-up {
  border-top: none;
  border-bottom: 5px solid #a8a8a8;
}

.tri-down {
  border-bottom: none;
  border-top: 5px solid #a8a8a8;
}

/* title bar */
.titlebar {
  display: grid;
  grid-template-columns: 16px 9px 28px 24px 24px 30px 1fr 78px;
  align-items: center;
  flex: none;
  height: 28px;
  margin-bottom: 2px;
  padding: 0 6px;
}

.app-icon {
  width: 16px;
  height: 16px;
}

.titlebar .vline {
  justify-self: end;
  height: 16px;
}

.quick {
  height: 24px;
}

.customize {
  flex-direction: column;
  gap: 2px;
}

.customize::before {
  content: "";
  width: 6px;
  height: 1px;
  background: #333;
}

.titlebar h1 {
  padding-right: 2px;
  text-align: center;
  font: 11px/16px "Open Sans", "Noto Sans", sans-serif;
}

.titlebar h1 span {
  color: #3f6cab;
}

.window-buttons {
  display: flex;
  gap: 2px;
}

.window-buttons button {
  width: 24px;
  height: 24px;
}

.window-buttons svg {
  width: 12px;
  height: 12px;
}

/* ribbon */
.ribbon-tabs {
  display: flex;
  align-items: flex-end;
  justify-content: space-between;
  flex: none;
  height: 25px;
  padding-left: 5px;
  background: linear-gradient(#cdcdcd, #cdcdcd) left bottom / 100% 1px no-repeat;
}

.ribbon-tab {
  width: 125px;
  height: 25px;
  border: 1px solid #cdcdcd;
  border-bottom: none;
  background: #fff;
  color: #3d62a8;
  text-align: center;
  font: 12px/24px "Open Sans", "Noto Sans", sans-serif;
}

.language {
  display: flex;
  align-self: center;
  gap: 10px;
  padding-right: 10px;
  color: #666;
  font: 13px/18px "Open Sans", "Noto Sans", sans-serif;
}

.language button {
  gap: 12px;
}

.language .caret {
  border-top-color: #666;
}

.language .help {
  color: #333;
  font-size: 12px;
  font-weight: bold;
}

.ribbon {
  display: flex;
  flex: none;
  height: 99px;
  margin: 0 6px 0 5px;
  padding: 3px 0 4px;
  border-bottom: 1px solid #cdcdcd;
}

.group {
  display: flex;
  flex-direction: column;
  justify-content: space-between;
  border-right: 1px solid #cdcdcd;
}

.group h2 {
  text-align: center;
}

.group-body {
  display: flex;
}

.group-file {
  width: 154px;
}

.group-panels {
  width: 218px;
}

.group-panels .group-body {
  gap: 12px;
  padding-left: 10px;
}

.group-tools {
  width: 48px;
}

.group-tools .group-body {
  justify-content: center;
}

.group-view {
  width: 234px;
}

.group-view .group-body {
  gap: 10px;
}

.big {
  display: block;
  padding-top: 4px;
  text-align: center;
}

.big:disabled {
  color: #b4b4b4;
}

.icon-big {
  width: 32px;
  height: 32px;
  margin: 0 auto 5px;
}

.big-print {
  width: 52px;
}

.small-list {
  width: 95px;
  padding-top: 3px;
}

.group-view .small-list {
  padding-left: 8px;
}

.small {
  justify-content: flex-start;
  width: 100%;
  height: 23px;
  gap: 5px;
  white-space: nowrap;
}

.small .caret {
  margin-left: auto;
}

/* main area */
main {
  display: flex;
  flex: 1;
  gap: 4px;
  min-height: 0;
  padding: 3px 6px 0 5px;
}

.toolbox {
  display: flex;
  flex-direction: column;
  align-self: flex-start;
  flex: none;
  width: 28px;
  height: 395px;
  margin-right: -2px;
  border: 1px solid #cdcdcd;
}

.toolbox button {
  height: 23px;
}

.toolbox .with-menu {
  flex-direction: column;
  justify-content: flex-start;
  gap: 5px;
  height: 33px;
  padding-top: 4px;
}

.with-menu::after {
  content: "";
  border: 3px solid transparent;
  border-left: 4px solid #111;
  border-right: none;
}

.toolbox hr {
  width: 24px;
  margin: 0 auto 1px;
  border: none;
  border-top: 1px solid #aaa;
}

.workspace {
  display: flex;
  flex-direction: column;
  flex: 1;
  min-width: 0;
}

.doc-tabs {
  display: flex;
  flex: none;
  height: 27px;
  padding: 2px 0 0 3px;
  border-bottom: 1px solid #cdcdcd;
}

.doc-tabs a {
  display: flex;
  align-items: center;
  gap: 7px;
  height: 24px;
  padding: 0 6px 0 4px;
  white-space: nowrap;
}

.doc-tabs .active {
  height: 25px;
  margin-left: 1px;
  padding-right: 9px;
  border: 1px solid #cdcdcd;
  border-top: 2px solid #2b579a;
  border-bottom: 1px solid #fff;
  background: #fff;
  color: #2b579a;
  font-weight: bold;
}

.viewer {
  display: flex;
  flex: 1;
  min-height: 0;
  padding-top: 1px;
}

.canvas {
  flex: 1;
  overflow: hidden;
  padding: 5px 24px 0 18px;
  border: 1px solid #77797f;
  border-right: none;
  border-bottom: none;
  background: #dce1e9;
}

.page {
  position: relative;
  height: 900px;
  padding: 46px 38px 0 54px;
  border: 2px solid #2b579a;
  background: #fff;
  box-shadow: 0 0 3px #b4bccb;
}

.record {
  height: 87px;
  font-size: 13px;
  line-height: 24px;
}

.record:nth-child(3n) {
  height: 86px;
}

.record h3 {
  display: flex;
  height: 31px;
  padding: 5px 0 0 3px;
  border-bottom: 1px solid #111;
  font-size: 16px;
  font-weight: bold;
}

.record h3 span {
  width: 39px;
}

.record p {
  display: flex;
  padding-left: 42px;
}

.record p:nth-child(2) {
  margin-top: -3px;
}

.record p span {
  width: 79px;
}

.note {
  position: absolute;
  top: 34px;
  left: 319px;
  display: flex;
  gap: 9px;
  color: #1432d2;
  font: 15px/20px Lato, sans-serif;
  white-space: nowrap;
}

.note svg {
  width: 56px;
  height: 30px;
  margin-top: 20px;
}

.scroll {
  display: flex;
  flex-direction: column;
  align-items: center;
  width: 17px;
  padding: 6px 0;
  border-right: 1px solid #e8e8e8;
}

.thumb {
  width: 12px;
  height: 375px;
  margin: 8px 0 auto;
  background: #e3e3e3;
}

.pager {
  display: flex;
  align-items: center;
  flex: none;
  gap: 14px;
  height: 28px;
  padding: 2px 15px 0 7px;
  background: #2b579a;
  color: #fff;
  font: 11px/16px "Open Sans", "Noto Sans", sans-serif;
}

.pager svg {
  width: 10px;
  height: 12px;
}

.page-no {
  padding: 0 2px;
}

.pager-right,
.status-right {
  display: flex;
  align-items: center;
  margin-left: auto;
}

.pager-right {
  height: 26px;
  padding-left: 4px;
  border-left: 1px solid #8aa5cf;
}

.mode {
  width: 22px;
  height: 20px;
}

.mode.on {
  background: #9db9e4;
}

.percent {
  padding: 0 23px 0 16px;
}

.zoom svg {
  width: 10px;
  height: 10px;
}

.slider {
  width: 95px;
  height: 20px;
  margin: 0 4px;
  appearance: none;
  background: linear-gradient(#6d8fc4, #6d8fc4) center / 100% 1px no-repeat;
}

.slider::-webkit-slider-thumb {
  appearance: none;
  width: 3px;
  height: 11px;
  background: #fff;
}

.knob::-webkit-slider-thumb {
  width: 8px;
  height: 12px;
  clip-path: polygon(0 0, 100% 0, 100% 70%, 50% 100%, 0 70%);
}

.actions {
  display: flex;
  align-items: center;
  flex: none;
  gap: 9px;
  height: 24px;
  margin-bottom: 1px;
  padding: 2px 0 0 149px;
  border: 1px solid #e4e4e4;
  border-top: none;
}

.plain {
  width: 95px;
  height: 20px;
  border: 1px solid #a4a4a4;
  background: #fff;
}

.plain:disabled {
  border-color: #cdcdcd;
  color: #b4b4b4;
}

.check {
  display: flex;
  align-items: center;
  gap: 6px;
  height: 16px;
}

.check input {
  width: 13px;
  height: 13px;
  margin: 0;
  appearance: none;
  border: 1px solid #9a9a9a;
  background: #fff;
}

.check input:checked::before {
  content: "";
  display: block;
  width: 4px;
  height: 8px;
  margin: 0 0 0 4px;
  border: solid #666;
  border-width: 0 2px 2px 0;
  transform: rotate(35deg);
}

.actions .check {
  padding-left: 5px;
}

/* docked panels */
.panel {
  display: flex;
  flex-direction: column;
  flex: none;
  border: 1px solid #bdbdbd;
}

.panel header {
  display: flex;
  align-items: center;
  flex: none;
  gap: 6px;
  height: 18px;
  padding: 0 2px 0 7px;
  color: #999;
}

.panel header h2 {
  flex: 1;
}

.panel header svg {
  width: 12px;
  height: 12px;
}

.report-tree {
  width: 246px;
}

.properties {
  width: 352px;
}

.dictionary {
  width: 299px;
}

.search {
  display: flex;
  gap: 6px;
  padding: 9px 7px 6px 8px;
}

.search input {
  flex: 1;
  min-width: 0;
  height: 20px;
  border: 1px solid #d4d4d4;
  border-radius: 2px;
}

.search .plain {
  width: 65px;
}

/* trees */
.tree {
  padding-left: 12px;
  list-style: none;
}

.tree ul {
  padding-left: 19px;
  list-style: none;
}

.tree li {
  background: repeating-linear-gradient(#888 0 1px, transparent 1px 2px) 4px 0 / 1px 100% no-repeat;
}

.tree li:last-child {
  background-size: 1px 8px;
}

.tree > li:first-child {
  background-position: 4px 8px;
}

.report-tree .tree > li {
  background: none;
}

.node {
  display: flex;
  align-items: center;
  height: 16px;
  white-space: nowrap;
}

.node span {
  margin-left: 2px;
  padding: 1px 3px 1px 2px;
  line-height: 14px;
}

.node.selected span {
  background: #efefef;
}

.node.leaf {
  padding-left: 4px;
}

.node.leaf::before {
  content: "";
  width: 12px;
  height: 1px;
  background: repeating-linear-gradient(90deg, #888 0 1px, transparent 1px 2px);
}

.toggle {
  width: 16px;
  height: 9px;
  background:
    linear-gradient(#3f5f9f, #3f5f9f) 2px 4px / 5px 1px no-repeat,
    linear-gradient(#8a94a4, #8a94a4) 0 0 / 9px 1px no-repeat,
    linear-gradient(#8a94a4, #8a94a4) 0 8px / 9px 1px no-repeat,
    linear-gradient(#8a94a4, #8a94a4) 0 0 / 1px 9px no-repeat,
    linear-gradient(#8a94a4, #8a94a4) 8px 0 / 1px 9px no-repeat,
    linear-gradient(#fff, #e4e4e4) 0 0 / 9px 9px no-repeat,
    repeating-linear-gradient(90deg, transparent 0 1px, #888 1px 2px) 9px 4px / 7px 1px no-repeat;
}

.toggle.plus {
  display: flex;
  padding: 2px 0 0 4px;
}

.toggle.plus::before {
  content: "";
  width: 1px;
  height: 5px;
  background: #3f5f9f;
}

/* property grid */
.component-row {
  display: flex;
  gap: 6px;
  padding: 6px 4px 0 5px;
}

.select-box {
  position: relative;
  flex: 1;
}

.select-box::after {
  content: "";
  position: absolute;
  top: 9px;
  right: 5px;
  border: 4px solid transparent;
  border-top-color: #999;
  border-bottom: none;
}

.select-box select {
  width: 100%;
  height: 22px;
  padding: 0 4px;
  appearance: none;
  border: 1px solid #b0b0b0;
  border-radius: 2px;
  background: #f2f2f2;
  color: #777;
  font: inherit;
  opacity: 1;
}

.sort {
  width: 22px;
  height: 21px;
  border: 1px solid #b0b0b0;
}

.sort svg {
  width: 16px;
  height: 18px;
}

.prop-toolbar {
  display: flex;
  gap: 2px;
  height: 32px;
  padding: 8px 4px 4px;
}

.prop-toolbar button {
  width: 22px;
  height: 20px;
}

.prop-toolbar svg {
  width: 16px;
  height: 16px;
}

.prop-toolbar .az,
.dict-toolbar .az {
  width: 16px;
  height: 18px;
}

.prop-toolbar .pressed {
  border: 1px solid #555;
  border-radius: 3px;
  background: #e9ebee;
}

.prop-toolbar .pressed svg {
  width: 18px;
  height: 16px;
}

.prop-toolbar .vline {
  background: #777;
}

.grid-box {
  display: flex;
  flex: 1;
  min-height: 0;
  margin: 0 2px;
  padding-top: 1px;
  border: 1px solid #999;
}

.grid-rows {
  flex: 1;
  overflow: hidden;
}

.grid-rows table {
  width: 100%;
  table-layout: fixed;
  border-spacing: 0;
}

.c-gutter {
  width: 21px;
}

.c-name {
  width: 127px;
}

.grid-rows td,
.grid-rows th {
  height: 16px;
  padding: 0 4px;
  border-bottom: 1px solid #ececec;
  text-align: left;
  font-weight: normal;
  line-height: 15px;
  white-space: nowrap;
}

.grid-rows th {
  padding-right: 0;
  border-right: 1px solid #ececec;
}

.grid-rows td:first-child,
.grid-rows .category th,
.grid-rows .current th {
  background: #efefef;
}

.grid-rows td:first-child {
  padding: 0 0 0 8px;
}

.grid-rows .category th {
  font-weight: bold;
}

.open,
.closed {
  display: block;
  width: 6px;
  height: 6px;
  background: #333;
  clip-path: polygon(100% 0, 100% 100%, 0 100%);
}

.closed {
  height: 8px;
  margin-left: 1px;
  background: #999;
  clip-path: polygon(0 0, 100% 50%, 0 100%, 0 0, 1px 2px, 1px 6px, 4px 4px, 1px 2px);
}

.grid-rows .swatch-cell {
  padding: 0 0 0 2px;
}

.swatch-cell div {
  display: flex;
  align-items: center;
  gap: 9px;
}

.swatch {
  width: 20px;
  height: 13px;
  margin: 1px 0;
  border: 1px solid #111;
  background: #fff;
}

.grid-scroll {
  display: flex;
  flex-direction: column;
  align-items: center;
  width: 17px;
  padding: 6px 1px;
  background: #f0f0f0;
}

.grid-scroll .tri-up {
  border-width: 0 3px 4px;
  border-bottom-color: #333;
}

.grid-scroll .tri-down {
  border-width: 4px 3px 0;
  border-top-color: #333;
}

.grid-thumb {
  display: flex;
  align-items: center;
  justify-content: center;
  width: 15px;
  height: 404px;
  margin: 50px 0 auto;
  border: 1px solid #999;
  border-radius: 2px;
  background: linear-gradient(90deg, #f6f6f6, #e2e2e4 50%, #b8b9bd);
}

.grid-thumb svg {
  width: 8px;
  height: 9px;
}

.prop-help {
  flex: none;
  height: 59px;
  margin: 4px 2px 2px;
  padding: 3px 5px;
  border: 1px solid #999;
  line-height: 15px;
}

/* dictionary */
.dict-toolbar {
  display: flex;
  align-items: center;
  flex: none;
  height: 26px;
  margin: 3px 2px 0;
  padding: 0 6px;
  border: 1px solid #bdbdbd;
}

.dict-toolbar button {
  width: 22px;
  height: 20px;
}

.dict-toolbar button:has(.caret) {
  width: 16px;
}

.dict-toolbar .events {
  justify-content: flex-start;
  width: 58px;
  font: 12px/16px "Open Sans", "Noto Sans", sans-serif;
}

.dict-toolbar svg {
  width: 14px;
  height: 16px;
}

.dict-toolbar .new {
  width: 18px;
}

.dict-toolbar .vline {
  height: 16px;
  margin: 0 3px;
}

.dict-toolbar + .tree {
  padding-left: 9px;
}

.dict-options {
  margin-top: auto;
  padding: 0 0 1px 5px;
}

/* status bar */
.statusbar {
  display: flex;
  align-items: center;
  flex: none;
  height: 28px;
  padding: 1px 4px 0 12px;
  background: #2b579a;
  color: #fff;
  font: 11px/16px "Open Sans", "Noto Sans", sans-serif;
}

.unit {
  gap: 12px;
  height: 18px;
  padding-right: 4px;
  border-right: 1px solid #7f9bc8;
}

.unit .tri-up {
  border-width: 0 3px 3px;
  border-bottom-color: #fff;
}

.checker {
  gap: 10px;
  height: 18px;
  padding: 0 10px;
  border-right: 1px solid #7f9bc8;
}

.play {
  border: 5px solid transparent;
  border-left: 6px solid #fff;
  border-right: none;
}

.cell {
  padding: 1px 9px 1px 7px;
  border-right: 1px solid #7f9bc8;
}

.coords {
  padding-left: 4px;
  border: none;
}

.status-right {
  height: 26px;
  padding-left: 7px;
  border-left: 1px solid #7f9bc8;
}

.status-right button:not(.zoom) {
  width: 16px;
  margin-right: 6px;
}

.status-right button:not(.zoom) svg {
  width: 16px;
  height: 14px;
}

.status-right .percent {
  padding: 0 12px 0 4px;
}

.grip {
  width: 12px;
  height: 12px;
  margin: 10px 0 0 22px;
}
```
